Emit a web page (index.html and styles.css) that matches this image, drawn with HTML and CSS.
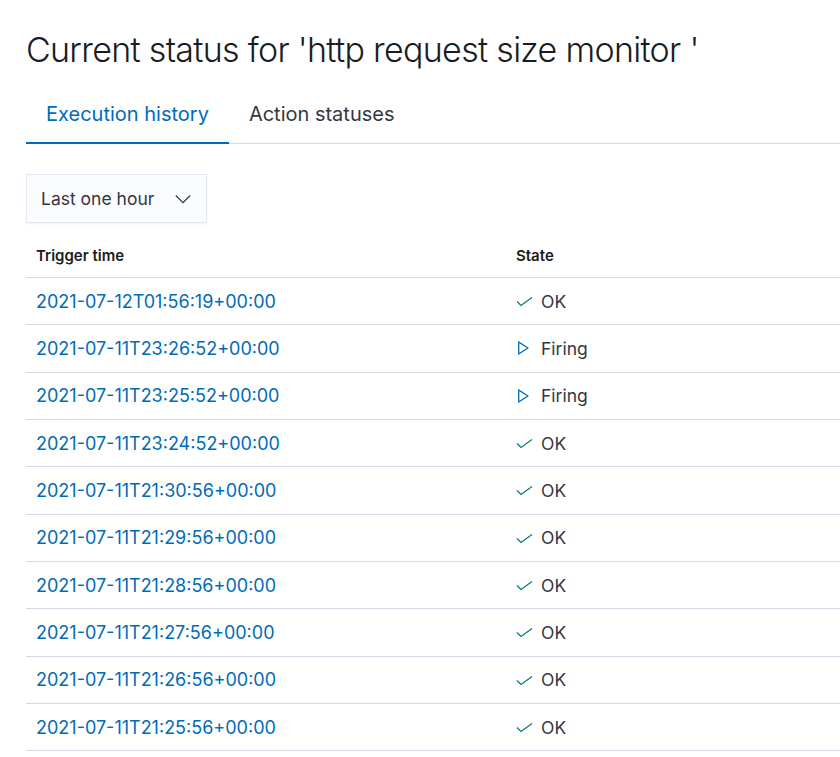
FILE: index.html
```html
<!DOCTYPE html>
<html>
<head>
<meta charset="utf-8">
<link rel="stylesheet" href="styles.css">
</head>
<body>
<div class="page">
  <h1 class="title">Current status for 'http request size monitor '</h1>
  <div class="tabs">
    <div class="tab active">Execution history</div>
    <div class="tab">Action statuses</div>
  </div>
  <div class="select">
    <span>Last one hour</span>
    <svg class="chev" width="16" height="16" viewBox="0 0 16 16"><path d="M0.8 4.5 L8 11.7 L15.2 4.5" fill="none" stroke="#343741" stroke-width="1.2"/></svg>
  </div>
  <table class="grid">
    <thead>
      <tr><th class="c1">Trigger time</th><th>State</th></tr>
    </thead>
    <tbody>
      <tr><td class="c1"><a>2021-07-12T01:56:19+00:00</a></td><td><span class="st"><svg width="17" height="16" viewBox="0 0 17 16"><path d="M1 8.5 L5 12.5 L16 4.5" fill="none" stroke="#017d73" stroke-width="1.2"/></svg>OK</span></td></tr>
      <tr><td class="c1"><a>2021-07-11T23:26:52+00:00</a></td><td><span class="st"><svg width="17" height="16" viewBox="0 0 17 16"><path d="M2.7 2 L12 8 L2.7 14 Z" fill="none" stroke="#006bb8" stroke-width="1.3" stroke-linejoin="round"/></svg>Firing</span></td></tr>
      <tr><td class="c1"><a>2021-07-11T23:25:52+00:00</a></td><td><span class="st"><svg width="17" height="16" viewBox="0 0 17 16"><path d="M2.7 2 L12 8 L2.7 14 Z" fill="none" stroke="#006bb8" stroke-width="1.3" stroke-linejoin="round"/></svg>Firing</span></td></tr>
      <tr><td class="c1"><a>2021-07-11T23:24:52+00:00</a></td><td><span class="st"><svg width="17" height="16" viewBox="0 0 17 16"><path d="M1 8.5 L5 12.5 L16 4.5" fill="none" stroke="#017d73" stroke-width="1.2"/></svg>OK</span></td></tr>
      <tr><td class="c1"><a>2021-07-11T21:30:56+00:00</a></td><td><span class="st"><svg width="17" height="16" viewBox="0 0 17 16"><path d="M1 8.5 L5 12.5 L16 4.5" fill="none" stroke="#017d73" stroke-width="1.2"/></svg>OK</span></td></tr>
      <tr><td class="c1"><a>2021-07-11T21:29:56+00:00</a></td><td><span class="st"><svg width="17" height="16" viewBox="0 0 17 16"><path d="M1 8.5 L5 12.5 L16 4.5" fill="none" stroke="#017d73" stroke-width="1.2"/></svg>OK</span></td></tr>
      <tr><td class="c1"><a>2021-07-11T21:28:56+00:00</a></td><td><span class="st"><svg width="17" height="16" viewBox="0 0 17 16"><path d="M1 8.5 L5 12.5 L16 4.5" fill="none" stroke="#017d73" stroke-width="1.2"/></svg>OK</span></td></tr>
      <tr><td class="c1"><a>2021-07-11T21:27:56+00:00</a></td><td><span class="st"><svg width="17" height="16" viewBox="0 0 17 16"><path d="M1 8.5 L5 12.5 L16 4.5" fill="none" stroke="#017d73" stroke-width="1.2"/></svg>OK</span></td></tr>
      <tr><td class="c1"><a>2021-07-11T21:26:56+00:00</a></td><td><span class="st"><svg width="17" height="16" viewBox="0 0 17 16"><path d="M1 8.5 L5 12.5 L16 4.5" fill="none" stroke="#017d73" stroke-width="1.2"/></svg>OK</span></td></tr>
      <tr><td class="c1"><a>2021-07-11T21:25:56+00:00</a></td><td><span class="st"><svg width="17" height="16" viewBox="0 0 17 16"><path d="M1 8.5 L5 12.5 L16 4.5" fill="none" stroke="#017d73" stroke-width="1.2"/></svg>OK</span></td></tr>
    </tbody>
  </table>
</div>
</body>
</html>
```

FILE: styles.css
```css
html, body {
  margin: 0;
  padding: 0;
  background: #ffffff;
  overflow: hidden;
}
body {
  font-family: Inter, "Noto Sans", sans-serif;
  color: #343741;
}
.page {
  padding: 26px 0 0 26px;
}
.title {
  margin: 0;
  font-size: 34px;
  font-weight: 300;
  line-height: 48px;
  color: #1a1c21;
  letter-spacing: -0.7px;
}
.tabs {
  display: flex;
  margin-top: 16px;
  border-bottom: 1px solid #d3dae6;
}
.tab {
  padding: 0 20px;
  height: 53px;
  line-height: 48px;
  font-size: 20px;
  color: #343741;
  box-sizing: border-box;
}
.tab.active {
  color: #006bb8;
  border-bottom: 2px solid #006bb8;
  margin-bottom: -1px;
  height: 54px;
}
.select {
  margin-top: 30px;
  width: 181px;
  height: 49px;
  box-sizing: border-box;
  background: #fbfcfd;
  border: 1px solid #e3e8f2;
  box-shadow: 0 1px 2px rgba(0,0,0,0.06);
  display: flex;
  align-items: center;
  justify-content: space-between;
  padding: 0 15px 0 14px;
  font-size: 17.5px;
  color: #343741;
}
.chev { display: block; }
.grid {
  margin-top: 11px;
  width: 100%;
  border-collapse: collapse;
}
.grid th {
  text-align: left;
  font-size: 15px;
  font-weight: 600;
  color: #1a1c21;
  height: 43px;
  padding: 0 10px;
  border-bottom: 1px solid #d3dae6;
  vertical-align: middle;
}
.grid th.c1, .grid td.c1 {
  width: 460px;
}
.grid td {
  height: 46.33px;
  padding: 0 10px;
  border-bottom: 1px solid #d3dae6;
  font-size: 18px;
  vertical-align: middle;
}
.grid a {
  color: #006bb8;
}
.st {
  display: flex;
  align-items: center;
  gap: 8px;
  color: #343741;
  font-size: 17.5px;
}
.st svg { display: block; }
```
